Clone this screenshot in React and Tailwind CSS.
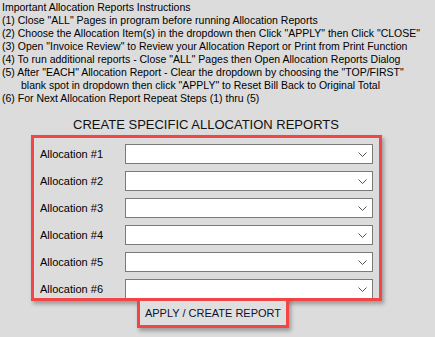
const INSTRUCTIONS = [
  'Important Allocation Reports Instructions',
  '(1) Close "ALL" Pages in program before running Allocation Reports',
  '(2) Choose the Allocation Item(s) in the dropdown then Click "APPLY" then Click "CLOSE"',
  '(3) Open "Invoice Review" to Review your Allocation Report or Print from Print Function',
  '(4) To run additional reports - Close "ALL" Pages then Open Allocation Reports Dialog',
  '(5) After "EACH" Allocation Report - Clear the dropdown by choosing the "TOP/FIRST"',
  null,
  '(6) For Next Allocation Report Repeat Steps (1) thru (5)',
]

function Chevron() {
  return (
    <svg width="9" height="5" viewBox="0 0 9 5" fill="none" stroke="#555" strokeWidth="1">
      <path d="M0.5 0.5 L4.5 4.5 L8.5 0.5" />
    </svg>
  )
}

function AllocationRow({ n }) {
  return (
    <div className="flex h-[20px] items-center">
      <span className="w-[85px] text-[11px] text-black">Allocation #{n}</span>
      <div className="flex h-[20px] w-[248px] items-center justify-end border border-[#7a7a7a] bg-white pr-[5px]">
        <Chevron />
      </div>
    </div>
  )
}

export default function App() {
  return (
    <div className="h-[337px] w-[435px] overflow-hidden bg-[#dcdcdc] font-['Liberation_Sans',Arial,sans-serif] text-black">
      {/* Instructions */}
      <div className="pl-[2px] pt-[1px] text-[10.5px] leading-[13px] whitespace-nowrap">
        {INSTRUCTIONS.map((line, i) =>
          line === null ? (
            <div key={i} className="pl-[19px]">
              blank spot in dropdown then click "APPLY" to Reset Bill Back to Original Total
            </div>
          ) : (
            <div key={i}>{line}</div>
          )
        )}
      </div>

      <div className="mt-[12px] pr-[23px] text-center text-[13px] leading-[16px] text-[#111]">
        CREATE SPECIFIC ALLOCATION REPORTS
      </div>

      {/* Allocation dropdowns */}
      <div className="ml-[31px] mt-[2px] h-[166px] w-[351px] overflow-hidden border-[3px] border-[#f24545] pl-[6px] pt-[6px] shadow-[2px_3px_4px_rgba(0,0,0,0.3)]">
        <div className="flex flex-col gap-[7px]">
          {[1, 2, 3, 4, 5, 6].map((n) => (
            <AllocationRow key={n} n={n} />
          ))}
        </div>
      </div>

      {/* Apply button */}
      <div className="relative ml-[137px] -mt-[3px] flex h-[30px] w-[152px] items-center justify-center border-[3px] border-[#f24545] bg-[#dfdfdf] shadow-[2px_3px_4px_rgba(0,0,0,0.3)]">
        <span className="text-[11px] text-[#101030]">APPLY / CREATE REPORT</span>
      </div>
    </div>
  )
}
